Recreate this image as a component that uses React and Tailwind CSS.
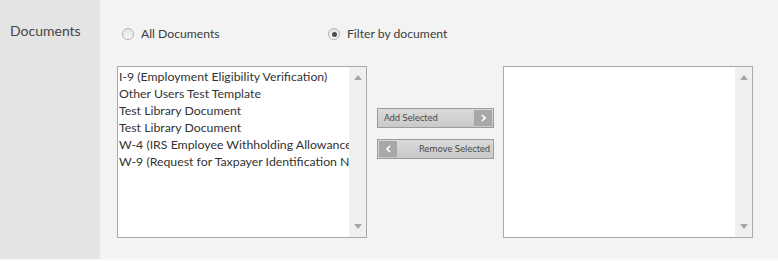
import React from 'react';

const docs = [
  'I-9 (Employment Eligibility Verification)',
  'Other Users Test Template',
  'Test Library Document',
  'Test Library Document',
  'W-4 (IRS Employee Withholding Allowance)',
  'W-9 (Request for Taxpayer Identification Number)',
];

const Radio = ({ checked, label }) => (
  <label className="flex items-center gap-[7px] text-[12.2px] text-[#3c3c3c]">
    <span className="w-[12px] h-[12px] rounded-full border border-[#b4b4b4] bg-gradient-to-b from-[#e2e2e2] to-[#fafafa] flex items-center justify-center">
      {checked && <span className="w-[5px] h-[5px] rounded-full bg-[#4a4a4a]" />}
    </span>
    {label}
  </label>
);

const ScrollTrack = () => (
  <div className="w-[17px] h-full bg-[#f0f0f0] flex flex-col items-center justify-between py-[8px] shrink-0">
    <svg width="8" height="5" viewBox="0 0 8 5"><path d="M4 0 L8 5 L0 5 Z" fill="#a6a6a6" /></svg>
    <svg width="8" height="5" viewBox="0 0 8 5"><path d="M0 0 L8 0 L4 5 Z" fill="#a6a6a6" /></svg>
  </div>
);

const ListBox = ({ items = [] }) => (
  <div className="w-[250px] h-[172px] border border-[#a9a9a9] bg-white flex overflow-hidden">
    <div className="flex-1 overflow-hidden pl-[1px] pt-[1px]">
      {items.map((d, i) => (
        <div key={i} className="h-[17px] leading-[17px] text-[12.3px] text-[#333] whitespace-nowrap">{d}</div>
      ))}
    </div>
    <ScrollTrack />
  </div>
);

const MoveButton = ({ dir, label }) => (
  <button className="w-[117px] h-[20px] border border-[#9c9c9c] bg-gradient-to-b from-[#dadada] to-[#c9c9c9] flex items-stretch p-[1px] text-[8.5px] text-[#4a4a4a] font-['DejaVu_Sans',sans-serif] tracking-[-0.2px]">
    {dir === 'left' && (
      <span className="w-[18px] bg-[#a8a8a8] flex items-center justify-center">
        <svg width="5" height="8" viewBox="0 0 5 8"><path d="M4 1 L1 4 L4 7" stroke="#fff" strokeWidth="1.6" fill="none" /></svg>
      </span>
    )}
    <span className={`flex-1 flex items-center ${dir === 'left' ? 'justify-end pr-[2px]' : 'justify-start pl-[5px]'}`}>{label}</span>
    {dir === 'right' && (
      <span className="w-[18px] bg-[#a8a8a8] flex items-center justify-center">
        <svg width="5" height="8" viewBox="0 0 5 8"><path d="M1 1 L4 4 L1 7" stroke="#fff" strokeWidth="1.6" fill="none" /></svg>
      </span>
    )}
  </button>
);

export default function App() {
  return (
    <div className="w-[778px] h-[261px] flex border-b-2 border-[#fbfbfb] font-['Lato',sans-serif]">
      <div className="w-[100px] bg-[#e4e4e4] pl-[10px] pt-[20px] text-[14px] text-[#444]">Documents</div>
      <div className="flex-1 bg-[#f3f3f3] pl-[17px] pt-[26px]">
        <div className="flex items-center h-[16px] pl-[5px]">
          <div className="w-[206px]"><Radio label="All Documents" /></div>
          <Radio checked label="Filter by document" />
        </div>
        <div className="flex items-start mt-[24px]">
          <ListBox items={docs} />
          <div className="flex flex-col gap-[11px] ml-[10px] mt-[42px]">
            <MoveButton dir="right" label="Add Selected" />
            <MoveButton dir="left" label="Remove Selected" />
          </div>
          <div className="ml-[9px]">
            <ListBox />
          </div>
        </div>
      </div>
    </div>
  );
}
